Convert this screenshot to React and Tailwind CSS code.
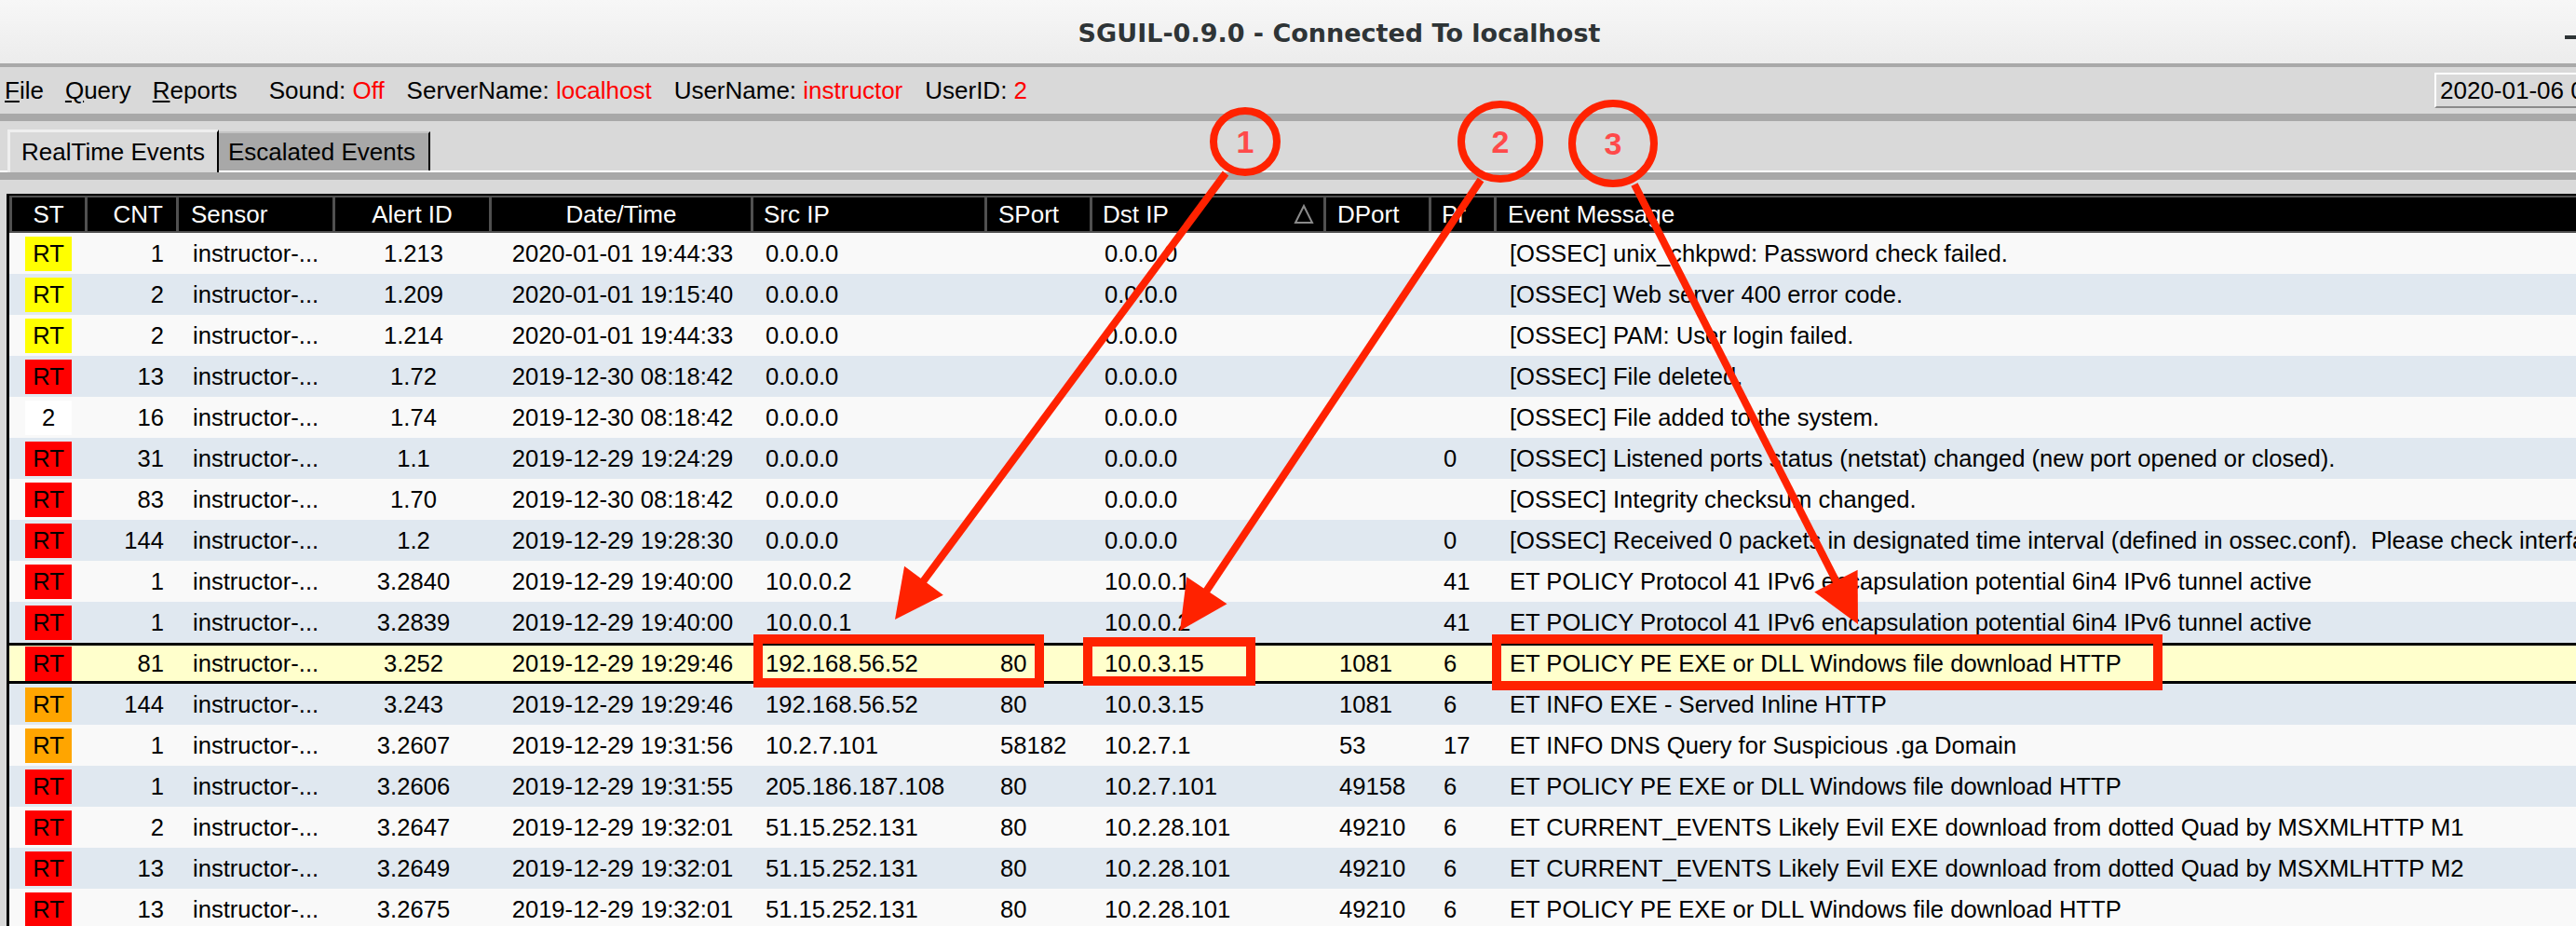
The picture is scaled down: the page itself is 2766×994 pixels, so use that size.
import React from "react";

const cols = [
  { label: "ST", cell: "w-[84px] justify-center", head: "w-[84px] justify-center border-l-[3px]" },
  { label: "CNT", cell: "w-[98px] justify-end pr-[16px]", head: "w-[98px] justify-end pr-[14px]" },
  { label: "Sensor", cell: "w-[168px] pl-[15px]", head: "w-[168px] pl-[13px]" },
  { label: "Alert ID", cell: "w-[168px] justify-center", head: "w-[168px] justify-center" },
  { label: "Date/Time", cell: "w-[281px] justify-center", head: "w-[281px] justify-center" },
  { label: "Src IP", cell: "w-[251px] pl-[13px]", head: "w-[251px] pl-[11px]" },
  { label: "SPort", cell: "w-[113px] pl-[14px]", head: "w-[113px] pl-[12px]" },
  { label: "Dst IP", cell: "w-[251px] pl-[13px]", head: "w-[251px] pl-[11px] justify-between pr-[10px]" },
  { label: "DPort", cell: "w-[113px] pl-[14px]", head: "w-[113px] pl-[12px]" },
  { label: "Pr", cell: "w-[70px] pl-[13px]", head: "w-[70px] pl-[11px]" },
  { label: "Event Message", cell: "w-[1300px] pl-[14px]", head: "w-[1300px] pl-[12px]" },
];

const badge = {
  y: "bg-[#ffff00]",
  r: "bg-[#ff0000]",
  o: "bg-[#ffa500]",
  w: "bg-white",
};

// st, color, cnt, alert id, date, src, sport, dst, dport, pr, message
const rows = [
  ["RT", "y", "1", "1.213", "2020-01-01 19:44:33", "0.0.0.0", "", "0.0.0.0", "", "", "[OSSEC] unix_chkpwd: Password check failed."],
  ["RT", "y", "2", "1.209", "2020-01-01 19:15:40", "0.0.0.0", "", "0.0.0.0", "", "", "[OSSEC] Web server 400 error code."],
  ["RT", "y", "2", "1.214", "2020-01-01 19:44:33", "0.0.0.0", "", "0.0.0.0", "", "", "[OSSEC] PAM: User login failed."],
  ["RT", "r", "13", "1.72", "2019-12-30 08:18:42", "0.0.0.0", "", "0.0.0.0", "", "", "[OSSEC] File deleted."],
  ["2", "w", "16", "1.74", "2019-12-30 08:18:42", "0.0.0.0", "", "0.0.0.0", "", "", "[OSSEC] File added to the system."],
  ["RT", "r", "31", "1.1", "2019-12-29 19:24:29", "0.0.0.0", "", "0.0.0.0", "", "0", "[OSSEC] Listened ports status (netstat) changed (new port opened or closed)."],
  ["RT", "r", "83", "1.70", "2019-12-30 08:18:42", "0.0.0.0", "", "0.0.0.0", "", "", "[OSSEC] Integrity checksum changed."],
  ["RT", "r", "144", "1.2", "2019-12-29 19:28:30", "0.0.0.0", "", "0.0.0.0", "", "0", "[OSSEC] Received 0 packets in designated time interval (defined in ossec.conf).\u00a0 Please check interface and cable connection."],
  ["RT", "r", "1", "3.2840", "2019-12-29 19:40:00", "10.0.0.2", "", "10.0.0.1", "", "41", "ET POLICY Protocol 41 IPv6 encapsulation potential 6in4 IPv6 tunnel active"],
  ["RT", "r", "1", "3.2839", "2019-12-29 19:40:00", "10.0.0.1", "", "10.0.0.2", "", "41", "ET POLICY Protocol 41 IPv6 encapsulation potential 6in4 IPv6 tunnel active"],
  ["RT", "r", "81", "3.252", "2019-12-29 19:29:46", "192.168.56.52", "80", "10.0.3.15", "1081", "6", "ET POLICY PE EXE or DLL Windows file download HTTP"],
  ["RT", "o", "144", "3.243", "2019-12-29 19:29:46", "192.168.56.52", "80", "10.0.3.15", "1081", "6", "ET INFO EXE - Served Inline HTTP"],
  ["RT", "o", "1", "3.2607", "2019-12-29 19:31:56", "10.2.7.101", "58182", "10.2.7.1", "53", "17", "ET INFO DNS Query for Suspicious .ga Domain"],
  ["RT", "r", "1", "3.2606", "2019-12-29 19:31:55", "205.186.187.108", "80", "10.2.7.101", "49158", "6", "ET POLICY PE EXE or DLL Windows file download HTTP"],
  ["RT", "r", "2", "3.2647", "2019-12-29 19:32:01", "51.15.252.131", "80", "10.2.28.101", "49210", "6", "ET CURRENT_EVENTS Likely Evil EXE download from dotted Quad by MSXMLHTTP M1"],
  ["RT", "r", "13", "3.2649", "2019-12-29 19:32:01", "51.15.252.131", "80", "10.2.28.101", "49210", "6", "ET CURRENT_EVENTS Likely Evil EXE download from dotted Quad by MSXMLHTTP M2"],
  ["RT", "r", "13", "3.2675", "2019-12-29 19:32:01", "51.15.252.131", "80", "10.2.28.101", "49210", "6", "ET POLICY PE EXE or DLL Windows file download HTTP"],
];

const Arrow = ({ x1, y1, x2, y2 }) => {
  const dx = x2 - x1;
  const dy = y2 - y1;
  const len = Math.hypot(dx, dy);
  const ux = dx / len;
  const uy = dy / len;
  const bx = x2 - ux * 52;
  const by = y2 - uy * 52;
  const nx = -uy * 26;
  const ny = ux * 26;
  return (
    <g>
      <line x1={x1} y1={y1} x2={bx + ux * 4} y2={by + uy * 4} stroke="#ff2200" strokeWidth="8" />
      <polygon points={`${x2},${y2} ${bx + nx},${by + ny} ${bx - nx},${by - ny}`} fill="#ff2200" />
    </g>
  );
};

const Marker = ({ cx, cy, rx, ry, n }) => (
  <g>
    <ellipse cx={cx} cy={cy} rx={rx} ry={ry} fill="none" stroke="#ff2200" strokeWidth="8" />
    <text
      x={cx}
      y={cy + 12}
      textAnchor="middle"
      fontFamily="Liberation Sans, Arial, sans-serif"
      fontWeight="bold"
      fontSize="34"
      fill="#ff4a4a">
      {n}
    </text>
  </g>
);

export default function App() {
  return (
    <div className="relative w-[2766px] h-[994px] overflow-hidden bg-[#d9d9d9] font-['Liberation_Sans',Arial,sans-serif] text-black">
      {/* title bar */}
      <div className="relative h-[72px] bg-gradient-to-b from-[#f7f7f7] to-[#ececec] border-b-[4px] border-[#a9a9a9] flex items-center justify-center pl-[110px] pt-[4px]">
        <span className="text-[27px] font-bold text-[#2e3436] font-['DejaVu_Sans',sans-serif]">SGUIL-0.9.0 - Connected To localhost</span>
        <div className="absolute right-0 top-[38px] w-[12px] h-[4px] bg-[#2e3436]"></div>
      </div>

      {/* menu bar */}
      <div className="h-[50px] flex items-center text-[26px] pl-[5px]">
        <div className="flex gap-[23px]">
          <span><span className="underline">F</span>ile</span>
          <span><span className="underline">Q</span>uery</span>
          <span><span className="underline">R</span>eports</span>
        </div>
        <div className="flex gap-[24px] ml-[34px]">
          <span>Sound: <span className="text-[#ff0000]">Off</span></span>
          <span>ServerName: <span className="text-[#ff0000]">localhost</span></span>
          <span>UserName: <span className="text-[#ff0000]">instructor</span></span>
          <span>UserID: <span className="text-[#ff0000]">2</span></span>
        </div>
        <div className="ml-auto mr-[-200px] w-[352px] h-[38px] flex items-center pl-[4px] border-l-2 border-t-2 border-white border-b-2 border-b-[#8a8a8a] whitespace-nowrap">
          2020-01-06 04:32:17 GMT
        </div>
      </div>
      <div className="h-[8px] bg-[#a8a8a8]"></div>

      {/* tabs */}
      <div className="h-[55px] flex items-end pl-[8px] border-b-2 border-white">
        <div className="relative z-10 -mb-[2px] h-[46px] w-[227px] flex items-center pl-[12px] bg-[#d9d9d9] border-t-[3px] border-l-[3px] border-[#efefef] border-r-2 border-r-black text-[26px]">
          RealTime Events
        </div>
        <div className="h-[42px] w-[227px] flex items-center pl-[10px] bg-[#a8a8a8] border-t-2 border-[#c4c4c4] border-r-2 border-r-black text-[26px]">
          Escalated Events
        </div>
      </div>
      <div className="h-[8px] bg-[#a8a8a8]"></div>

      {/* event table */}
      <div className="pt-[15px] pl-[7px]">
        <div className="border-l-[3px] border-t-2 border-black overflow-hidden">
          <div className="flex h-[40px] bg-black text-white text-[26px]">
            {cols.map((c) => (
              <div key={c.label} className={`shrink-0 flex items-center border-y-2 border-r-[3px] border-[#505050] whitespace-nowrap ${c.head}`}>
                <span>{c.label}</span>
                {c.label === "Dst IP" ? (
                  <svg width="22" height="22" viewBox="0 0 22 22">
                    <path d="M11 2 L20 20 L2 20 Z" fill="none" stroke="#8a8a8a" strokeWidth="2" />
                  </svg>
                ) : null}
              </div>
            ))}
          </div>
          {rows.map((r, i) => {
            const [st, color, cnt, ...rest] = r;
            const values = [cnt, "instructor-...", ...rest];
            const rowBg =
              i === 10
                ? "bg-[#ffffcc] border-y-[3px] border-black"
                : i % 2 === 0
                ? "bg-[#f9f9f9]"
                : "bg-[#e0e8f0]";
            return (
              <div key={i} className={`flex h-[44px] text-[25.6px] ${rowBg}`}>
                <div className={`shrink-0 flex items-center ${cols[0].cell}`}>
                  <div className={`w-[50px] h-[37px] flex items-center justify-center ${badge[color]}`}>{st}</div>
                </div>
                {values.map((v, j) => (
                  <div key={j} className={`shrink-0 flex items-center whitespace-nowrap ${cols[j + 1].cell}`}>
                    {v}
                  </div>
                ))}
              </div>
            );
          })}
        </div>
      </div>

      {/* annotations */}
      <svg className="absolute inset-0 pointer-events-none" width="2766" height="994" viewBox="0 0 2766 994">
        <rect x="814" y="686" width="302" height="47" fill="none" stroke="#ff2200" strokeWidth="10" />
        <rect x="1168" y="689" width="175" height="42" fill="none" stroke="#ff2200" strokeWidth="10" />
        <rect x="1607" y="686" width="710" height="50" fill="none" stroke="#ff2200" strokeWidth="10" />
        <Arrow x1={1316} y1={186} x2={961} y2={665} />
        <Arrow x1={1590} y1={193} x2={1267} y2={677} />
        <Arrow x1={1755} y1={198} x2={1995} y2={670} />
        <Marker cx={1337} cy={152} rx={34} ry={33} n="1" />
        <Marker cx={1611} cy={152} rx={42} ry={40} n="2" />
        <Marker cx={1732} cy={154} rx={44} ry={43} n="3" />
      </svg>
    </div>
  );
}
